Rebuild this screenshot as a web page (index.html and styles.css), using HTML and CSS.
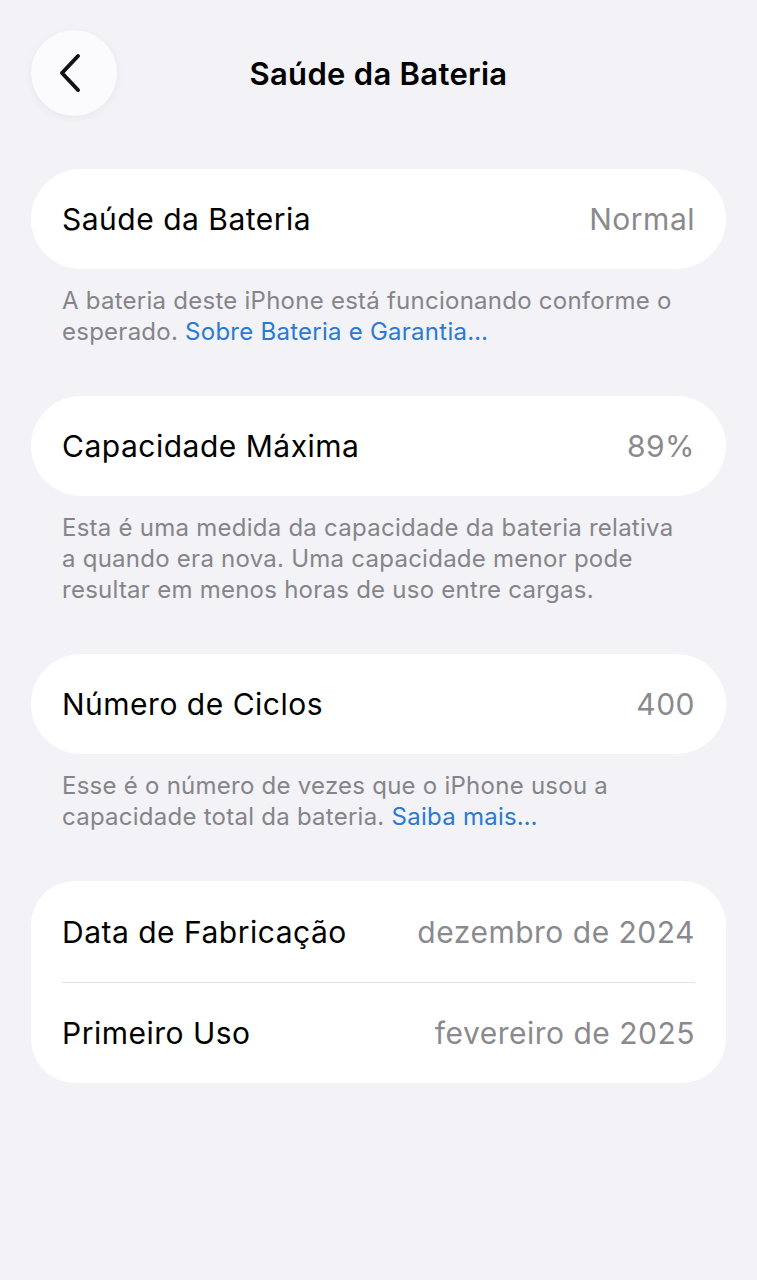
FILE: index.html
```html
<!DOCTYPE html>
<html lang="pt-BR">
<head>
<meta charset="utf-8">
<link rel="stylesheet" href="styles.css">
</head>
<body>
<div class="screen">
  <header class="nav">
    <div class="back">
      <svg width="30" height="40" viewBox="0 0 30 40"><path d="M22 3 L6 20 L22 37" fill="none" stroke="#111" stroke-width="4" stroke-linecap="round" stroke-linejoin="round"/></svg>
    </div>
    <h1 class="title">Saúde da Bateria</h1>
  </header>

  <section class="group">
    <div class="card">
      <div class="row"><span class="label">Saúde da Bateria</span><span class="value">Normal</span></div>
    </div>
    <p class="note">A bateria deste iPhone está funcionando conforme o esperado. <span class="link">Sobre Bateria e Garantia…</span></p>
  </section>

  <section class="group">
    <div class="card">
      <div class="row"><span class="label">Capacidade Máxima</span><span class="value">89%</span></div>
    </div>
    <p class="note">Esta é uma medida da capacidade da bateria relativa a quando era nova. Uma capacidade menor pode resultar em menos horas de uso entre cargas.</p>
  </section>

  <section class="group">
    <div class="card">
      <div class="row"><span class="label">Número de Ciclos</span><span class="value">400</span></div>
    </div>
    <p class="note">Esse é o número de vezes que o iPhone usou a capacidade total da bateria. <span class="link">Saiba mais…</span></p>
  </section>

  <section class="group">
    <div class="card multi">
      <div class="row"><span class="label">Data de Fabricação</span><span class="value">dezembro de 2024</span></div>
      <div class="row"><span class="label">Primeiro Uso</span><span class="value">fevereiro de 2025</span></div>
    </div>
  </section>
</div>
</body>
</html>
```

FILE: styles.css
```css
* { box-sizing: border-box; }
html, body { margin: 0; padding: 0; }
body {
  background: #f2f2f7;
  font-family: Inter, "Liberation Sans", sans-serif;
  -webkit-font-smoothing: antialiased;
}
.screen {
  width: 757px;
  height: 1280px;
  padding: 30px 31px 0 31px;
}
.nav {
  position: relative;
  height: 86px;
  display: flex;
  align-items: center;
  justify-content: center;
  margin-bottom: 53px;
}
.back {
  position: absolute;
  left: 0;
  top: 0;
  width: 86px;
  height: 86px;
  border-radius: 50%;
  background: #fbfbfd;
  box-shadow: 0 2px 10px rgba(0,0,0,0.05);
  display: flex;
  align-items: center;
  justify-content: center;
  padding-right: 6px;
}
.title {
  margin: 0;
  font-size: 31px;
  font-weight: 600;
  color: #000;
  letter-spacing: 0.3px;
}
.group { margin-bottom: 49px; }
.card {
  background: #fff;
  border-radius: 50px;
  padding: 0 31px;
}
.card.multi { border-radius: 44px; }
.row {
  height: 100px;
  display: flex;
  align-items: center;
  justify-content: space-between;
  font-size: 30px;
  letter-spacing: 0.5px;
}
.card.multi .row { height: 101px; }
.card.multi .row + .row { border-top: 1.5px solid #e2e2e6; }
.label { color: #000; }
.value { color: #8a8a8e; }
.note {
  margin: 16px 0 0 0;
  padding: 0 42px 0 31px;
  font-size: 24px;
  line-height: 31px;
  color: #858589;
  letter-spacing: 0.25px;
}
.link { color: #2a7ad2; }
```
